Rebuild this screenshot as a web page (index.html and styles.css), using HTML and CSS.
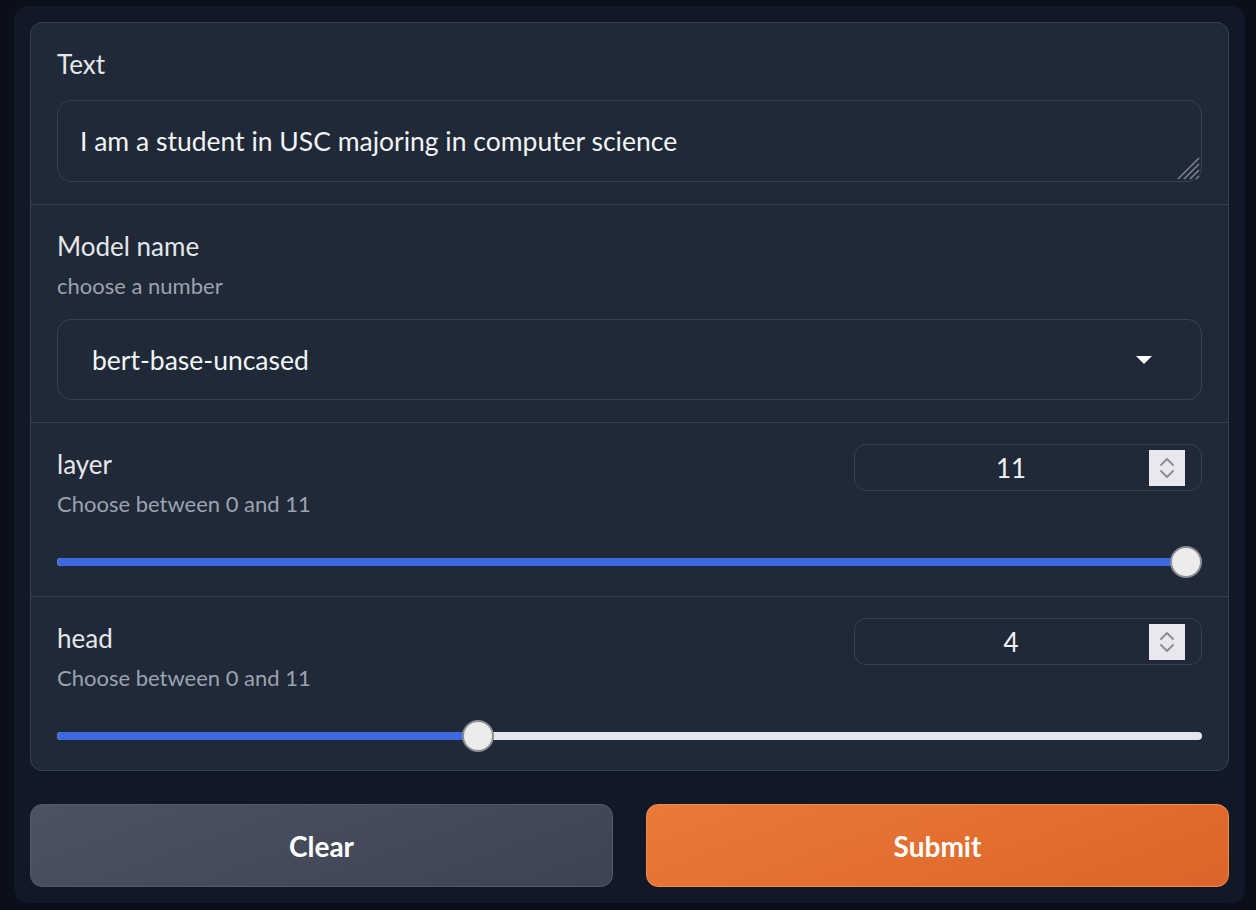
FILE: index.html
```html
<!DOCTYPE html>
<html>
<head>
<meta charset="utf-8">
<link rel="stylesheet" href="styles.css">
</head>
<body>
<div class="panel">
  <div class="form">
    <div class="section">
      <div class="label">Text</div>
      <div class="textarea">
        <span class="tv">I am a student in USC majoring in computer science</span>
        <svg class="grip" width="26" height="26" viewBox="0 0 26 26"><path d="M25 4 L4 25 M25 10 L10 25 M25 16 L16 25 M25 22 L22 25" stroke="#7d828b" stroke-width="1.6" fill="none"/></svg>
      </div>
    </div>
    <div class="section">
      <div class="label">Model name</div>
      <div class="info">choose a number</div>
      <div class="dropdown">
        <span class="dv">bert-base-uncased</span>
        <span class="caret"></span>
      </div>
    </div>
    <div class="section slider-sec">
      <div class="row">
        <div class="col">
          <div class="label">layer</div>
          <div class="info">Choose between 0 and 11</div>
        </div>
        <div class="num">
          <span class="nv">11</span>
          <span class="spin"><svg width="36" height="36" viewBox="0 0 36 36"><path d="M12 15 L18 9 L24 15 M12 21 L18 27 L24 21" stroke="#8e8e96" stroke-width="2" fill="none" stroke-linecap="round" stroke-linejoin="round"/></svg></span>
        </div>
      </div>
      <div class="slider">
        <div class="track"><div class="fill" style="width:100%"></div></div>
        <div class="thumb" style="left:calc((100% - 32px) * 1)"></div>
      </div>
    </div>
    <div class="section slider-sec">
      <div class="row">
        <div class="col">
          <div class="label">head</div>
          <div class="info">Choose between 0 and 11</div>
        </div>
        <div class="num">
          <span class="nv">4</span>
          <span class="spin"><svg width="36" height="36" viewBox="0 0 36 36"><path d="M12 15 L18 9 L24 15 M12 21 L18 27 L24 21" stroke="#8e8e96" stroke-width="2" fill="none" stroke-linecap="round" stroke-linejoin="round"/></svg></span>
        </div>
      </div>
      <div class="slider">
        <div class="track"><div class="fill" style="width:calc((100% - 32px) * 0.3636 + 16px)"></div></div>
        <div class="thumb" style="left:calc((100% - 32px) * 0.3636)"></div>
      </div>
    </div>
  </div>
  <div class="buttons">
    <button class="btn clear">Clear</button>
    <button class="btn submit">Submit</button>
  </div>
</div>
</body>
</html>
```
FILE: styles.css
```css
html, body {
  background: #0b0f19;
}
body {
  margin: 6px 11px 0 14px;
  font-family: "Lato", "Noto Sans", sans-serif;
  color: #e5e7eb;
}
.panel {
  background: #111827;
  border-radius: 14px;
  padding: 16px;
  height: 897px;
  box-sizing: border-box;
}
.form {
  background: #1f2937;
  border: 1px solid #374151;
  border-radius: 12px;
  overflow: hidden;
}
.section {
  padding: 21px 26px 22px;
  border-top: 1px solid #374151;
}
.section:first-child {
  border-top: none;
}
.slider-sec {
  padding-bottom: 18px;
}
.label {
  font-size: 26px;
  line-height: 40px;
  color: #e5e7eb;
}
.section:first-child .label {
  margin-bottom: 16px;
}
.info {
  font-size: 22px;
  line-height: 40px;
  color: #9ca3af;
}
.textarea {
  height: 82px;
  box-sizing: border-box;
  border: 1px solid #374151;
  border-radius: 14px;
  padding: 0 22px;
  display: flex;
  align-items: center;
  position: relative;
}
.tv {
  font-size: 26.5px;
  color: #f3f4f6;
}
.grip {
  position: absolute;
  right: 1px;
  bottom: 1px;
}
.dropdown {
  margin-top: 13px;
  height: 81px;
  box-sizing: border-box;
  border: 1px solid #374151;
  border-radius: 14px;
  padding: 0 49px 0 34px;
  display: flex;
  align-items: center;
  justify-content: space-between;
}
.dv {
  font-size: 26.5px;
  color: #f3f4f6;
}
.caret {
  width: 0;
  height: 0;
  border-left: 8px solid transparent;
  border-right: 8px solid transparent;
  border-top: 8px solid #ffffff;
}
.row {
  display: flex;
  justify-content: space-between;
  align-items: flex-start;
}
.num {
  width: 348px;
  height: 47px;
  box-sizing: border-box;
  border: 1px solid #374151;
  border-radius: 12px;
  display: flex;
  align-items: center;
  padding: 0 16px 0 18px;
}
.nv {
  flex: 1;
  text-align: center;
  font-size: 26px;
  color: #f3f4f6;
}
.spin {
  width: 36px;
  height: 36px;
  background: #e9e8ee;
  display: flex;
}
.slider {
  position: relative;
  height: 32px;
  margin-top: 22px;
}
.track {
  position: absolute;
  left: 0;
  right: 0;
  top: 12px;
  height: 8px;
  border-radius: 4px;
  background: #e5e7eb;
  overflow: hidden;
}
.fill {
  height: 100%;
  background: #3b69e2;
  border-radius: 4px 0 0 4px;
}
.thumb {
  position: absolute;
  top: 0;
  width: 32px;
  height: 32px;
  box-sizing: border-box;
  border-radius: 50%;
  background: #ececec;
  border: 2px solid #8a8d93;
}
.buttons {
  display: flex;
  gap: 33px;
  margin-top: 33px;
}
.btn {
  flex: 1;
  height: 83px;
  border-radius: 12px;
  font-family: "Lato", "Noto Sans", sans-serif;
  font-weight: 700;
  font-size: 28px;
  color: #ffffff;
  cursor: pointer;
}
.clear {
  background: linear-gradient(160deg, #4b5361, #3c4454);
  border: 1px solid #515a69;
}
.submit {
  background: linear-gradient(160deg, #e97a37, #dc642a);
  border: 1px solid #ef8d4c;
}
```
